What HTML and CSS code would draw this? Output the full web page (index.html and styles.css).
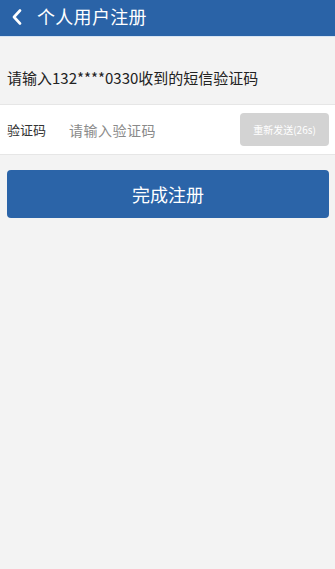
FILE: index.html
```html
<!DOCTYPE html>
<html lang="zh">
<head>
<meta charset="utf-8">
<link rel="stylesheet" href="styles.css">
</head>
<body>
<header class="topbar">
  <svg class="back" width="10" height="16" viewBox="0 0 10 16"><path d="M8 1.5 L2 8 L8 14.5" fill="none" stroke="#fff" stroke-width="2.6" stroke-linecap="round" stroke-linejoin="round"/></svg>
  <span class="title">个人用户注册</span>
</header>
<div class="hint">请输入132****0330收到的短信验证码</div>
<div class="row">
  <span class="label">验证码</span>
  <span class="placeholder">请输入验证码</span>
  <span class="resend">重新发送(26s)</span>
</div>
<div class="actions">
  <button class="submit">完成注册</button>
</div>
</body>
</html>
```
FILE: styles.css
```css
* { box-sizing: border-box; }
html, body {
  margin: 0;
  padding: 0;
  background: #f3f3f3;
  font-family: "Noto Sans CJK SC", "Noto Sans", sans-serif;
  width: 335px;
  height: 569px;
  overflow: hidden;
}
.topbar {
  height: 37px;
  background: #2a63a7;
  border-bottom: 1px solid #d6e4f3;
  display: flex;
  align-items: center;
  padding-left: 12px;
  color: #fff;
}
.back { margin-right: 15px; margin-top: -2px; }
.title {
  font-size: 18px;
  line-height: 1;
  margin-top: -5px;
  letter-spacing: 0.3px;
}
.hint {
  height: 67px;
  display: flex;
  align-items: center;
  padding: 14px 0 0 7px;
  font-size: 15px;
  color: #222;
}
.row {
  height: 51px;
  background: #fff;
  border-top: 1px solid #e6e6e6;
  border-bottom: 1px solid #e6e6e6;
  display: flex;
  align-items: center;
  padding: 0 6px 0 7px;
}
.label {
  font-size: 13px;
  color: #333;
  width: 62px;
}
.placeholder {
  font-size: 14px;
  color: #8a8a8a;
  letter-spacing: 0.5px;
  flex: 1;
}
.resend {
  width: 89px;
  height: 33px;
  background: #d3d3d3;
  border-radius: 4px;
  color: #fff;
  font-size: 10px;
  display: flex;
  align-items: center;
  justify-content: center;
}
.actions {
  padding: 15px 6px 0 7px;
}
.submit {
  width: 100%;
  height: 48px;
  border: none;
  border-radius: 4px;
  background: #2b64a8;
  color: #fff;
  font-family: inherit;
  font-size: 18px;
  display: block;
  padding: 0;
}
```
